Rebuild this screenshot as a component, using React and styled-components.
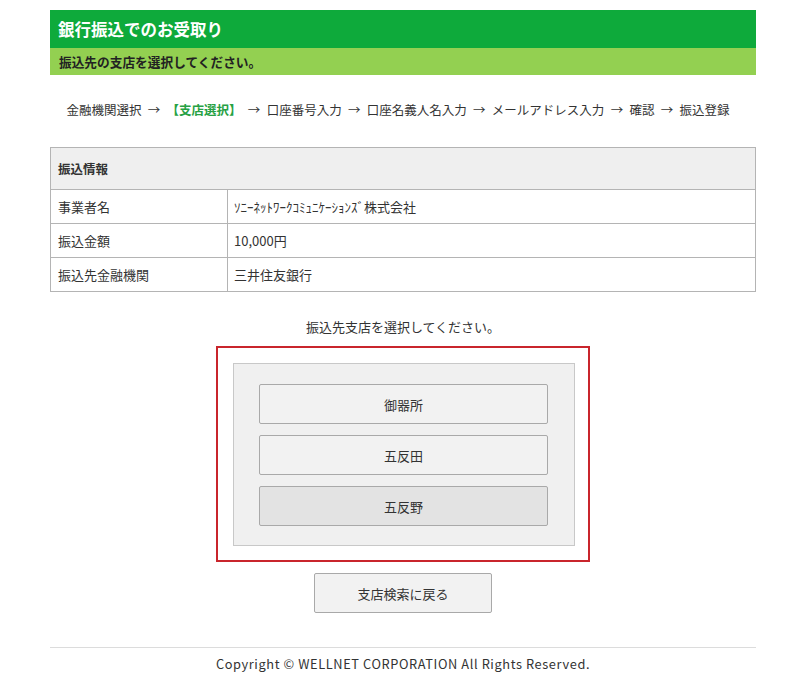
import React, { useState } from "react";
import styled, { createGlobalStyle } from "styled-components";

const GlobalStyle = createGlobalStyle`
  body {
    margin: 0;
    background: #fff;
    font-family: "Noto Sans CJK JP", "DejaVu Sans", sans-serif;
    color: #333;
  }
`;

const Page = styled.div`
  width: 706px;
  margin: 10px 0 0 50px;
`;

const TitleBar = styled.h1`
  margin: 0;
  height: 38px;
  display: flex;
  align-items: center;
  padding-left: 8px;
  background: #0eaa3b;
  color: #fff;
  font-size: 16.5px;
  font-weight: 700;
`;

const SubBar = styled.div`
  height: 27px;
  display: flex;
  align-items: center;
  padding-left: 9px;
  background: #93d051;
  color: #222;
  font-size: 12.7px;
  font-weight: 700;
`;

const Steps = styled.div`
  margin-top: 25px;
  padding-right: 10px;
  text-align: center;
  font-size: 12.5px;
  word-spacing: 3.5px;
  line-height: 20px;
  color: #333;
`;

const Current = styled.span`
  color: #27a144;
  font-weight: 700;
`;

const InfoTable = styled.table`
  margin-top: 27px;
  width: 100%;
  border-collapse: collapse;
  font-size: 13px;
  th, td {
    border: 1px solid #b4b4b4;
    text-align: left;
  }
`;

const HeadCell = styled.th`
  height: 41px;
  padding: 0 7px;
  background: #efefef;
  font-weight: 700;
  font-size: 12.5px;
`;

const Label = styled.td`
  width: 162px;
  height: 33px;
  padding: 0 7px;
`;

const Value = styled.td`
  height: 33px;
  padding: 0 6px;
  font-size: 13px;
`;

const Prompt = styled.p`
  margin: 26px 0 0;
  text-align: center;
  font-size: 13px;
  line-height: 18px;
`;

const Highlight = styled.div`
  box-sizing: border-box;
  width: 374px;
  margin: 10px auto 0;
  border: 2px solid #c9252c;
  padding: 15px 13px 14px 15px;
`;

const BranchPanel = styled.div`
  background: #f0f0f0;
  border: 1px solid #c8c8c8;
  padding: 20px 26px 19px 25px;
  display: flex;
  flex-direction: column;
  gap: 11px;
`;

const Button = styled.button`
  height: 40px;
  width: ${({ $width }) => $width || "100%"};
  border: 1px solid #a9a9a9;
  border-radius: 2px;
  background: ${({ $active }) => ($active ? "#e3e3e3" : "#f2f2f2")};
  color: #333;
  font-family: inherit;
  font-size: 13px;
  cursor: pointer;
  &:hover {
    background: #e3e3e3;
  }
`;

const BackRow = styled.div`
  display: flex;
  justify-content: center;
  margin-top: 11px;
`;

const Footer = styled.footer`
  margin-top: 34px;
  border-top: 1px solid #dcdcdc;
  padding-top: 7px;
  text-align: center;
  font-size: 12.8px;
  letter-spacing: 0.6px;
  line-height: 18px;
  color: #333;
`;

const rows = [
  ["事業者名", "ｿﾆｰﾈｯﾄﾜｰｸｺﾐｭﾆｹｰｼｮﾝｽﾞ株式会社"],
  ["振込金額", "10,000円"],
  ["振込先金融機関", "三井住友銀行"],
];

const branches = ["御器所", "五反田", "五反野"];

const App = () => {
  const [selected, setSelected] = useState("五反野");

  return (
    <Page>
      <GlobalStyle />
      <TitleBar>銀行振込でのお受取り</TitleBar>
      <SubBar>振込先の支店を選択してください。</SubBar>
      <Steps>
        金融機関選択 → <Current>【支店選択】</Current> → 口座番号入力 → 口座名義人名入力 → メールアドレス入力 → 確認 → 振込登録
      </Steps>
      <InfoTable>
        <thead>
          <tr>
            <HeadCell colSpan={2}>振込情報</HeadCell>
          </tr>
        </thead>
        <tbody>
          {rows.map(([label, value]) => (
            <tr key={label}>
              <Label>{label}</Label>
              <Value>{value}</Value>
            </tr>
          ))}
        </tbody>
      </InfoTable>
      <Prompt>振込先支店を選択してください。</Prompt>
      <Highlight>
        <BranchPanel>
          {branches.map((name) => (
            <Button key={name} $active={selected === name} onClick={() => setSelected(name)}>
              {name}
            </Button>
          ))}
        </BranchPanel>
      </Highlight>
      <BackRow>
        <Button $width="178px">支店検索に戻る</Button>
      </BackRow>
      <Footer>Copyright © WELLNET CORPORATION All Rights Reserved.</Footer>
    </Page>
  );
};

export default App;
